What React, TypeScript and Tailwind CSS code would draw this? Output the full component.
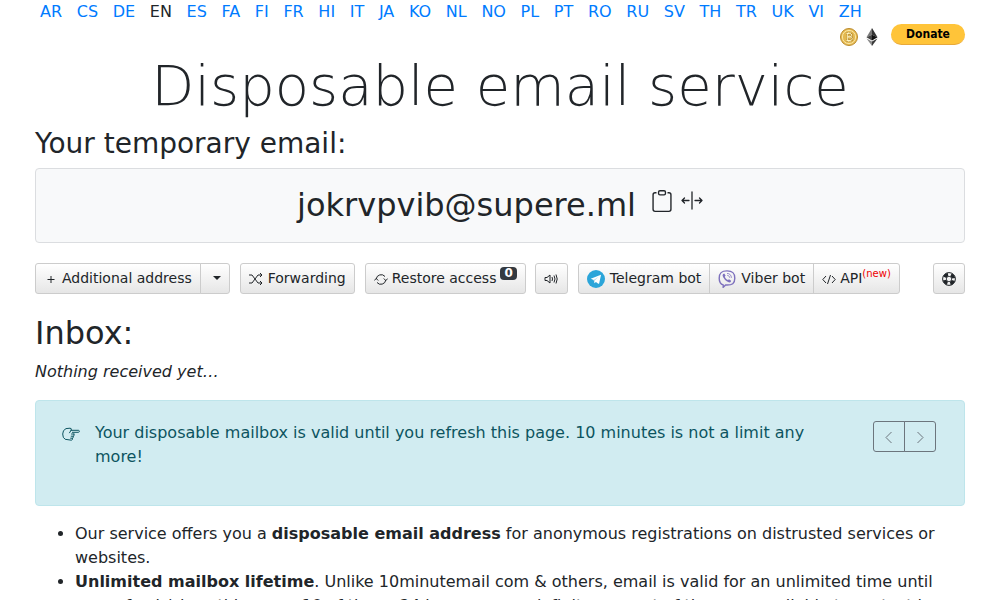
import type { ReactNode } from 'react';
import { BsClipboard } from 'react-icons/bs';

const languages = [
  'AR', 'CS', 'DE', 'EN', 'ES', 'FA', 'FI', 'FR', 'HI', 'IT', 'JA', 'KO',
  'NL', 'NO', 'PL', 'PT', 'RO', 'RU', 'SV', 'TH', 'TR', 'UK', 'VI', 'ZH',
];

const buttonStyle =
  'flex items-center h-[31px] px-2 pb-px border border-[#ccc] bg-linear-to-b from-white to-[#e6e6e6] text-sm text-[#212529] whitespace-nowrap cursor-pointer';

function ToolButton({ className = 'rounded-[3px]', label, children }: { className?: string; label?: string; children: ReactNode }) {
  return (
    <button type="button" aria-label={label} className={`${buttonStyle} ${className}`}>
      {children}
    </button>
  );
}

function LineIcon({ children, className = 'mt-px w-[14px] h-[14px]' }: { children: ReactNode; className?: string }) {
  return (
    <svg viewBox="0 0 14 14" className={className} fill="none" stroke="currentColor" strokeWidth="1" aria-hidden="true">
      {children}
    </svg>
  );
}

function BitcoinIcon() {
  return (
    <svg viewBox="0 0 18 18" className="w-[18px] h-[18px]" aria-hidden="true">
      <circle cx="9" cy="9" r="8.5" fill="#e9bd55" stroke="#b98a2c" />
      <circle cx="9" cy="9" r="6.6" fill="#e3b850" stroke="#f9e6a4" />
      <path d="M6.5 5.5h3.2q2 0 2 1.7T9.8 8.9H7.7h2.4q2.2 0 2.2 1.8t-2.3 1.8H6.5M7.7 5.5v7M8.2 4v1.5M10 4v1.5M8.2 12.5V14M10 12.5V14" fill="none" stroke="#a87a20" strokeWidth="1.8" />
      <path d="M6.5 5.5h3.2q2 0 2 1.7T9.8 8.9H7.7h2.4q2.2 0 2.2 1.8t-2.3 1.8H6.5M7.7 5.5v7M8.2 4v1.5M10 4v1.5M8.2 12.5V14M10 12.5V14" fill="none" stroke="#fff3bd" strokeWidth="1" />
    </svg>
  );
}

function EthereumIcon() {
  return (
    <svg viewBox="0 0 12 18" className="w-3 h-[18px]" aria-hidden="true">
      <path d="M6 0 .5 9.2 6 6.7z" fill="#777" />
      <path d="m6 0 5.5 9.2L6 6.7z" fill="#333" />
      <path d="M.5 9.2 6 6.7v5.7z" fill="#444" />
      <path d="M11.5 9.2 6 6.7v5.7z" fill="#111" />
      <path d="M.5 10.4 6 13.6V18z" fill="#888" />
      <path d="M11.5 10.4 6 13.6V18z" fill="#3a3a3a" />
    </svg>
  );
}

function TelegramIcon() {
  return (
    <svg viewBox="0 0 18 18" className="mt-px w-[18px] h-[18px]" aria-hidden="true">
      <circle cx="9" cy="9" r="9" fill="#2ca5d9" />
      <path d="m3.7 8.8 9.6-3.9q.8-.2.6.7l-1.7 7.7q-.2.8-.9.4L8.9 12l-1.4 1.3-.8-3.4z" fill="#fff" />
      <path d="m6.7 9.9 4.8-3.2-3.8 3.8-.2 2.8z" fill="#b4d6e8" />
    </svg>
  );
}

function ViberIcon() {
  return (
    <svg viewBox="0 0 18 18" className="mt-px w-[18px] h-[18px]" fill="none" stroke="#7d70bd" aria-hidden="true">
      <path d="M9 .9c-5.5 0-7.8 1.8-7.8 7.3 0 3.8 1 5.8 4 6.7v2.4L7.6 15c6.9.4 9.2-1.6 9.2-6.8S14.5.9 9 .9z" strokeWidth="1.4" />
      <path d="m5.2 4.1 1-.5 1.4 2-.8 1.1c.5 1.5 1.6 2.7 3.2 3.4l1-.9 2.1 1.5-.4 1.3c-1.5 1.8-6.8-2-8-5.9-.2-.8-.1-1.4.5-2z" fill="#7d70bd" stroke="none" />
      <path d="M9 3.4c2.6 0 4.4 1.8 4.4 4.5M9.2 5.3c1.4.1 2.3 1 2.4 2.4" strokeWidth=".8" />
    </svg>
  );
}

function LifeRingIcon() {
  return (
    <svg viewBox="0 0 14 14" className="mt-px w-[14px] h-[14px]" fill="none" stroke="currentColor" aria-hidden="true">
      <circle cx="7" cy="7" r="6.4" strokeWidth="1" />
      <circle cx="7" cy="7" r="2.7" strokeWidth=".8" />
      <circle cx="7" cy="7" r="4.6" strokeWidth="3.6" strokeDasharray="4.2 3.02" strokeDashoffset="-1.5" />
    </svg>
  );
}

function HandIcon() {
  return (
    <svg viewBox="0 0 18 14" className="w-[18px] h-[14px]" fill="none" stroke="currentColor" strokeWidth="1" strokeLinecap="round" strokeLinejoin="round" aria-hidden="true">
      <path d="M7.5 5.8 9.3 3Q9.7 1.2 8 1.2L4 1.6Q.7 3 .7 7t2.5 5.3l6.2.9q1.5-.3 1-2 1.4-.5.9-2 1.3-.7.7-2.2" />
      <path d="M9 3.3h7.4q1 .2 1 1t-1 1h-6M9.5 7H12M9.2 9.2h2M8.6 11.2h1.8" />
    </svg>
  );
}

export default function App() {
  return (
    <div className="h-screen overflow-hidden bg-white px-[35px] font-['DejaVu_Sans',sans-serif] text-base text-[#212529]">
      <nav className="flex max-w-[832px] justify-between px-[5px]">
        {languages.map(code =>
          code === 'EN' ? (
            <span key={code}>{code}</span>
          ) : (
            <a key={code} href={`#${code.toLowerCase()}`} className="text-[#007bff]">
              {code}
            </a>
          ),
        )}
      </nav>

      <div className="flex justify-end">
        <a href="#bitcoin" aria-label="Donate Bitcoin" className="pt-1">
          <BitcoinIcon />
        </a>
        <a href="#ethereum" aria-label="Donate Ethereum" className="ml-2 pt-1">
          <EthereumIcon />
        </a>
        <button
          type="button"
          className="ml-[13px] h-[21px] w-[74px] rounded-full border-b border-[#e8a93a] bg-[#ffc439] font-['DejaVu_Sans_Condensed','DejaVu_Sans',sans-serif] text-xs font-bold text-black cursor-pointer"
        >
          Donate
        </button>
      </div>

      <h1 className="mt-[6px] text-center text-[56px] leading-[67px] font-extralight">Disposable email service</h1>

      <h2 className="mt-2 text-[28px] leading-[34px]">Your temporary email:</h2>
      <div className="mt-[7px] flex h-[75px] items-center justify-center rounded-[4px] border border-[#dbdde0] bg-[#f8f9fa] pb-[2px]">
        <span className="text-[32px] leading-[38px]">jokrvpvib@supere.ml</span>
        <button type="button" aria-label="Copy" className="ml-[15px] mb-2 cursor-pointer">
          <BsClipboard className="w-[22px] h-[22px]" />
        </button>
        <button type="button" aria-label="Expand" className="ml-2 mb-2 cursor-pointer">
          <svg viewBox="0 0 22 22" className="w-[22px] h-[22px]" fill="none" stroke="currentColor" strokeWidth="1.3" strokeLinecap="round" strokeLinejoin="round">
            <path d="M11 2v17M8 10.5H1M3.5 8 1 10.5 3.5 13M14 10.5h7M18.5 8l2.5 2.5-2.5 2.5" />
          </svg>
        </button>
      </div>

      <div className="mt-5 flex">
        <ToolButton className="rounded-l-[3px]">
          <LineIcon className="mt-px mr-1 w-[14px] h-[14px]">
            <path d="M3.5 7.5h7M7 4v7" />
          </LineIcon>
          Additional address
        </ToolButton>
        <ToolButton label="More address options" className="-ml-px w-[30px] justify-center rounded-r-[3px]">
          <span className="ml-1 border-x-4 border-t-4 border-x-transparent border-t-[#212529]" />
        </ToolButton>

        <ToolButton className="ml-[10px] rounded-[3px]">
          <LineIcon className="mt-px mr-[5px] w-[14px] h-[14px]">
            <path d="M0 3h3l6 8h4M0 11h3l6-8h4M11 1l2 2-2 2M11 9l2 2-2 2" />
          </LineIcon>
          Forwarding
        </ToolButton>

        <ToolButton className="ml-[10px] rounded-[3px]">
          <LineIcon className="mt-px mr-1 w-[14px] h-[14px]">
            <path d="M2.2 7A5 5 0 0 1 11 4.5M11.8 8A5 5 0 0 1 3 10.5M.3 8.5 2.2 6.5l2 2M9.8 6.5l2 2 2-2" />
          </LineIcon>
          Restore access
          <span className="mb-[10px] ml-1 rounded-[4px] bg-[#343a40] px-1 text-xs leading-[13px] font-bold text-white">0</span>
        </ToolButton>

        <ToolButton label="Sound" className="ml-[9px] w-[33px] justify-center rounded-[3px]">
          <LineIcon>
            <path d="M1 5.5h2L6 3v8L3 8.5H1zM8 5q1 2 0 4M10 3.5q2 3.5 0 7M12 2.5q2.4 4.5 0 9" />
          </LineIcon>
        </ToolButton>

        <div className="ml-[10px] flex">
          <ToolButton className="gap-[5px] rounded-l-[3px]">
            <TelegramIcon />
            Telegram bot
          </ToolButton>
          <ToolButton className="-ml-px gap-[5px]">
            <ViberIcon />
            Viber bot
          </ToolButton>
          <ToolButton className="-ml-px rounded-r-[3px]">
            <LineIcon className="mt-px mr-1 w-[14px] h-[14px]">
              <path d="M4 4 .8 7.5 4 11M10 4l3.2 3.5L10 11M8.5 3l-3 9" />
            </LineIcon>
            API
            <span className="mb-2 text-[10px] leading-3 text-[#e00]">(new)</span>
          </ToolButton>
        </div>

        <ToolButton label="Help" className="ml-auto w-8 justify-center rounded-[3px]">
          <LifeRingIcon />
        </ToolButton>
      </div>

      <h2 className="mt-5 text-[32px] leading-[38px]">Inbox:</h2>
      <p className="mt-2 italic">Nothing received yet…</p>

      <div className="mt-4 flex h-[106px] items-start rounded-[4px] border border-[#bee5eb] bg-[#d1ecf1] px-[26px] pt-5 text-[#0c5460]">
        <span className="w-[33px] pt-[6px]">
          <HandIcon />
        </span>
        <p className="flex-1 pr-10">Your disposable mailbox is valid until you refresh this page. 10 minutes is not a limit any more!</p>
        <div className="mr-[2px] flex text-[#6c757d]">
          <button type="button" aria-label="Previous tip" className="flex h-[31px] w-8 items-center justify-center rounded-l-[3px] border border-current cursor-pointer">
            <LineIcon>
              <path d="M9.5 2 4 7.5 9.5 13" />
            </LineIcon>
          </button>
          <button type="button" aria-label="Next tip" className="-ml-px flex h-[31px] w-8 items-center justify-center rounded-r-[3px] border border-current cursor-pointer">
            <LineIcon>
              <path d="M4.5 2 10 7.5 4.5 13" />
            </LineIcon>
          </button>
        </div>
      </div>

      <ul className="mt-4 list-disc pl-10">
        <li>
          Our service offers you a <b>disposable email address</b> for anonymous registrations on distrusted services or websites.
        </li>
        <li>
          <b>Unlimited mailbox lifetime</b>. Unlike 10minutemail com &amp; others, email is valid for an unlimited time until you refresh/close this page. 10 of them, 24 hours or any definite amount of time are available to protect in
        </li>
      </ul>
    </div>
  );
}
